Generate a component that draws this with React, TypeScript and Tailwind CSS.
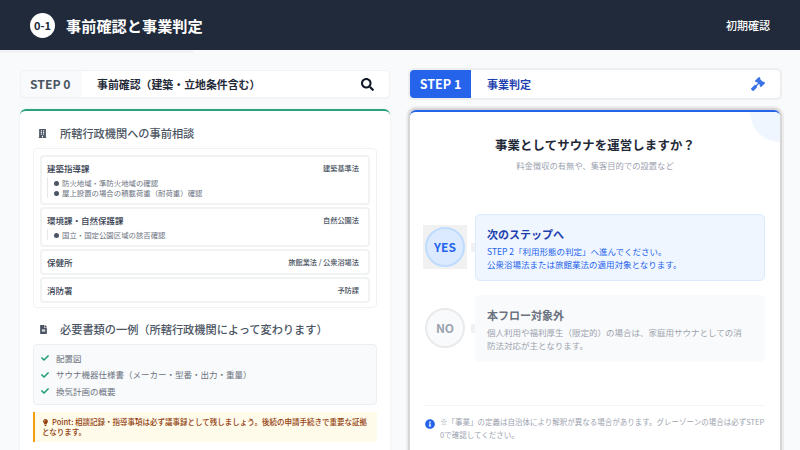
import { FaBuilding, FaCheck, FaFileAlt, FaGavel, FaInfoCircle, FaLightbulb, FaSearch } from "react-icons/fa";

const offices = [
  {
    name: "建築指導課",
    law: "建築基準法",
    notes: ["防火地域・準防火地域の確認", "屋上設置の場合の積載荷重（耐荷重）確認"],
  },
  { name: "環境課・自然保護課", law: "自然公園法", notes: ["国立・国定公園区域の該否確認"] },
  { name: "保健所", law: "旅館業法 / 公衆浴場法", notes: [] },
  { name: "消防署", law: "予防課", notes: [] },
];

const documents = ["配置図", "サウナ機器仕様書（メーカー・型番・出力・重量）", "換気計画の概要"];

function OfficeRow({ name, law, notes }: { name: string; law: string; notes: string[] }) {
  return (
    <div className="bg-white pl-[5px] pr-[9px] py-[3px] rounded-[2px] ring-2 ring-[#f1f2f2]">
      <div className="flex items-center justify-between h-[16px]">
        <span className="text-[8.5px] font-medium text-[#374151]">{name}</span>
        <span className="text-[7.2px] font-medium text-[#4b5563]">{law}</span>
      </div>
      {notes.length > 0 && (
        <div className="border-l border-[#e5e7eb] pl-[6px] mt-[1px] mb-[2px] pt-px">
          {notes.map((note) => (
            <div key={note} className="flex items-center gap-[2px] h-[10px] text-[7.4px] text-[#6b7280]">
              <span className="w-[5px] h-[5px] rounded-full bg-[#4b5563] mr-[1px]" />
              {note}
            </div>
          ))}
        </div>
      )}
    </div>
  );
}

function Choice({
  label,
  title,
  lines,
  active,
}: {
  label: string;
  title: string;
  lines: string[];
  active?: boolean;
}) {
  return (
    <div className="flex items-center">
      <div className={`flex items-center justify-center w-[44px] h-[44px] ${active ? "bg-[#f1f1f1]" : ""}`}>
        <div
          className={`flex items-center justify-center w-[40px] h-[40px] rounded-full border-2 font-bold text-[12px] ${
            active
              ? "bg-[#dbeafe] border-[#bfdbfe] text-[#2563eb]"
              : "bg-[#f9fafb] border-[#e9eaeb] text-[#9ca3af]"
          }`}
        >
          {label}
        </div>
      </div>
      <div className="w-[4px] h-[9px] ml-[4px] bg-[#f1f1f1]" />
      <div
        className={`flex-1 h-[67px] rounded-[5px] px-[11px] pt-[11px] border ${
          active ? "bg-[#eff6ff] border-[#dbeafe]" : "bg-[#f9fafb] border-[#f9fafb]"
        }`}
      >
        <div className={`text-[11px] font-bold leading-[16px] ${active ? "text-[#1e40af]" : "text-[#6b7280]"}`}>
          {title}
        </div>
        <div className={`mt-[3px] text-[8.5px] leading-[13px] ${active ? "text-[#2563eb]" : "text-[#9ca3af]"}`}>
          {lines.map((line) => (
            <div key={line}>{line}</div>
          ))}
        </div>
      </div>
    </div>
  );
}

export default function App() {
  return (
    <div
      className="w-[800px] h-[450px] overflow-hidden bg-[#f9fafb] bg-[radial-gradient(#eef0f2_0.5px,transparent_0.5px)] bg-[length:6px_6px]"
      style={{ fontFamily: '"Noto Sans CJK JP", "Noto Sans", sans-serif' }}
    >
      <header className="flex items-center justify-between h-[50px] px-[30px] bg-[#202a3a] text-white">
        <div className="flex items-center gap-[11px]">
          <span className="flex items-center justify-center w-[25px] h-[25px] rounded-full bg-white text-[#202a3a] text-[11px] font-bold">
            0-1
          </span>
          <h1 className="text-[15.2px] font-bold">事前確認と事業判定</h1>
        </div>
        <span className="text-[11px] font-medium">初期確認</span>
      </header>
      <div className="w-[193px] h-[3px] bg-[#f1f2f3]" />

      <main className="grid grid-cols-2 gap-[20px] px-[20px] pt-[17px]">
        <section className="min-w-0">
          <div className="flex h-[28px] rounded-[4px] border border-[#f1f2f3] bg-[#f9fafb] shadow-[0_1px_1px_#f3f4f6]">
            <div className="flex items-center w-[61px] pl-[9px] text-[12.2px] font-bold text-[#4b5563]">STEP 0</div>
            <div className="flex flex-1 items-center justify-between px-[15px] bg-white rounded-r-[4px]">
              <span className="text-[10.9px] font-bold text-[#1f2937]">事前確認（建築・立地条件含む）</span>
              <FaSearch className="text-[13px] text-[#111827]" />
            </div>
          </div>

          <div className="mt-[11px] h-[400px] bg-white rounded-t-[6px] border-t-2 border-[#2aa27a] px-[13px] shadow-[0_0_3px_#eceef0]">
            <h2 className="flex items-center h-[37px] pt-[8px] text-[11.2px] font-medium text-[#4b5563]">
              <FaBuilding className="text-[9px] ml-[5px] mr-[13px]" />
              所轄行政機関への事前相談
            </h2>
            <div className="flex flex-col gap-[6px] border border-[#f1f2f3] rounded-[4px] px-[8px] py-[8px] h-[160px]">
              {offices.map((office) => (
                <OfficeRow key={office.name} {...office} />
              ))}
            </div>

            <h2 className="flex items-center h-[36px] pt-[7px] text-[11.2px] font-medium text-[#4b5563]">
              <FaFileAlt className="text-[9px] ml-[6px] mr-[12px]" />
              必要書類の一例（所轄行政機関によって変わります）
            </h2>
            <ul className="flex flex-col h-[61px] justify-center gap-[3.5px] px-[7px] rounded-[4px] border border-[#eceef0] bg-[#f9fafb]">
              {documents.map((doc) => (
                <li key={doc} className="flex items-center gap-[7px] h-[13px] text-[8.5px] text-[#6b7280]">
                  <FaCheck className="text-[8px] text-[#1f9d72]" />
                  {doc}
                </li>
              ))}
            </ul>
            <p className="mt-[7px] h-[30px] pl-[7px] pr-[9px] pt-[5px] border-l-2 border-[#f59e0b] bg-[#fffbeb] text-[7.5px] leading-[10px] font-medium text-[#92400e]">
              <FaLightbulb className="inline text-[7px] mr-[3px] align-[-1px]" />
              Point: 相談記録・指導事項は必ず議事録として残しましょう。後続の申請手続きで重要な証拠となります。
            </p>
          </div>
        </section>

        <section className="min-w-0">
          <div className="flex h-[28px] rounded-[4px] bg-white ring-2 ring-[#eeeeee]">
            <div className="flex items-center justify-center w-[61px] rounded-l-[4px] bg-[#2563eb] text-white text-[12.5px] font-bold">
              STEP 1
            </div>
            <div className="flex flex-1 items-center justify-between pl-[16px] pr-[15px]">
              <span className="text-[11px] font-bold text-[#1e40af]">事業判定</span>
              <FaGavel className="text-[14px] text-[#3b72e8]" />
            </div>
          </div>

          <div className="relative mt-[12px] h-[400px] overflow-hidden bg-white rounded-t-[6px] border-t-2 border-[#2563eb] px-[15px] shadow-[0_0_0_2px_#d6d6d6,0_0_0_4px_#ececec]">
            <div className="absolute -top-[30px] -right-[30px] w-[60px] h-[60px] rounded-full bg-[#eff6ff]" />
            <div className="pt-[23px] text-center">
              <h2 className="text-[12.4px] leading-[20px] font-bold tracking-[0.01em] text-[#1f2937]">
                事業としてサウナを運営しますか？
              </h2>
              <p className="mt-[2.5px] text-[8.3px] leading-[14px] text-[#9ca3af]">
                料金徴収の有無や、集客目的での設置など
              </p>
            </div>
            <div className="flex flex-col gap-[14px] mt-[42px] -ml-[2px]">
              <Choice
                active
                label="YES"
                title="次のステップへ"
                lines={["STEP 2「利用形態の判定」へ進んでください。", "公衆浴場法または旅館業法の適用対象となります。"]}
              />
              <Choice
                label="NO"
                title="本フロー対象外"
                lines={["個人利用や福利厚生（限定的）の場合は、家庭用サウナとしての消", "防法対応が主となります。"]}
              />
            </div>
            <div className="flex gap-[5px] mt-[43px] pt-[9px] border-t border-[#f3f4f6]">
              <FaInfoCircle className="shrink-0 mt-[4px] text-[10px] text-[#2563eb]" />
              <p className="text-[7.5px] leading-[13px] text-[#9ca3af]">
                ※「事業」の定義は自治体により解釈が異なる場合があります。グレーゾーンの場合は必ずSTEP
                0で確認してください。
              </p>
            </div>
          </div>
        </section>
      </main>
    </div>
  );
}
